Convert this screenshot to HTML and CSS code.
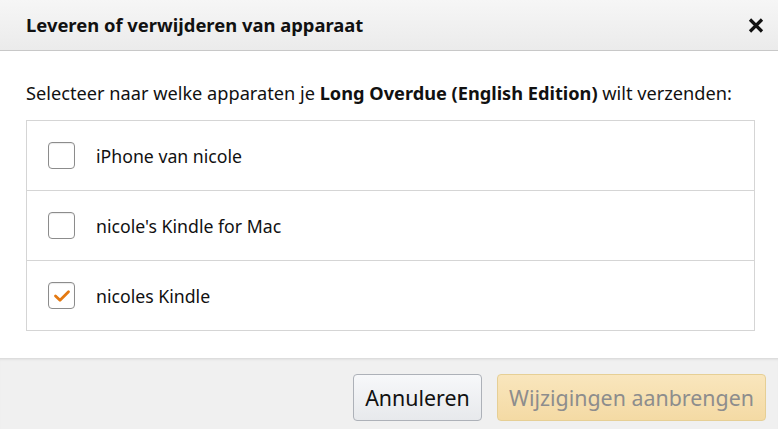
FILE: index.html
```html
<!DOCTYPE html>
<html lang="nl">
<head>
<meta charset="utf-8">
<title>Leveren of verwijderen van apparaat</title>
<link rel="stylesheet" href="styles.css">
</head>
<body>
<div class="dialog">
  <header class="dlg-header">
    <h1 class="dlg-title">Leveren of verwijderen van apparaat</h1>
    <button class="dlg-close" aria-label="Sluiten">
      <svg width="16" height="15" viewBox="0 0 16 15"><path d="M2 1.5 L14 13.5 M14 1.5 L2 13.5" stroke="#111" stroke-width="3.2" stroke-linecap="butt"/></svg>
    </button>
  </header>
  <main class="dlg-body">
    <p class="intro">Selecteer naar welke apparaten je <b>Long Overdue (English Edition)</b> wilt verzenden:</p>
    <ul class="device-list">
      <li class="device"><span class="cb"></span><span class="label">iPhone van nicole</span></li>
      <li class="device"><span class="cb"></span><span class="label">nicole's Kindle for Mac</span></li>
      <li class="device"><span class="cb checked"><svg width="18" height="14" viewBox="0 0 18 14"><path d="M2.5 7 L7 11.2 L15.5 2.8" fill="none" stroke="#e47911" stroke-width="2.8" stroke-linecap="round" stroke-linejoin="round"/></svg></span><span class="label">nicoles Kindle</span></li>
    </ul>
  </main>
  <footer class="dlg-footer">
    <button class="btn btn-secondary">Annuleren</button>
    <button class="btn btn-primary" disabled>Wijzigingen aanbrengen</button>
  </footer>
</div>
</body>
</html>
```

FILE: styles.css
```css
html, body {
  margin: 0;
  padding: 0;
  background: #fff;
}
body {
  font-family: "Noto Sans", "Open Sans", sans-serif;
  color: #111;
  width: 778px;
  height: 429px;
  overflow: hidden;
}
.dialog {
  display: flex;
  flex-direction: column;
  height: 429px;
}
.dlg-header {
  height: 51px;
  box-sizing: border-box;
  display: flex;
  align-items: center;
  justify-content: space-between;
  padding: 0 14px 0 26px;
  background: linear-gradient(#f6f6f6, #ebebeb);
  border-bottom: 1px solid #c8c8c8;
}
.dlg-title {
  margin: 0;
  font-size: 18.4px;
  line-height: 24px;
  font-weight: 700;
  color: #111;
}
.dlg-close {
  border: 0;
  background: none;
  padding: 0;
  width: 17px;
  height: 17px;
  display: flex;
  align-items: center;
  justify-content: center;
  cursor: pointer;
}
.dlg-body {
  flex: 1;
  padding: 0 23px 0 26px;
}
.intro {
  margin: 0;
  padding-top: 30px;
  height: 39px;
  font-size: 18.2px;
  line-height: 24px;
  color: #111;
  white-space: nowrap;
}
.device-list {
  list-style: none;
  margin: 0;
  padding: 0;
  border: 1px solid #d5d5d5;
}
.device {
  height: 69px;
  display: flex;
  align-items: center;
  padding-left: 21px;
  gap: 21px;
  border-top: 1px solid #d5d5d5;
}
.device:first-child {
  border-top: 0;
}
.cb {
  width: 25px;
  height: 25px;
  border: 1px solid #8c8c8c;
  border-radius: 4px;
  box-sizing: content-box;
  display: flex;
  align-items: center;
  justify-content: center;
  background: #fff;
  box-shadow: inset 0 1px 1px rgba(0,0,0,0.08);
}
.label {
  font-size: 17.7px;
  color: #111;
}
.dlg-footer {
  height: 71px;
  box-sizing: border-box;
  display: flex;
  align-items: center;
  justify-content: flex-end;
  gap: 15px;
  padding: 8px 12px 0 0;
  background: #f0f0f0;
  box-shadow: inset 0 3px 3px -2px rgba(0,0,0,0.12);
}
.btn {
  height: 47px;
  box-sizing: border-box;
  border-radius: 4px;
  font-family: inherit;
  font-size: 21.4px;
  padding: 0 10px;
  white-space: nowrap;
}
.btn-secondary {
  width: 129px;
  background: linear-gradient(#f7f8fa, #e7e9ec);
  border: 1px solid #adb1b8;
  color: #111;
}
.btn-primary {
  width: 269px;
  background: linear-gradient(#f9e6bd, #f4daa4);
  border: 1px solid #e6cf95;
  color: #8d8d8d;
}
```
